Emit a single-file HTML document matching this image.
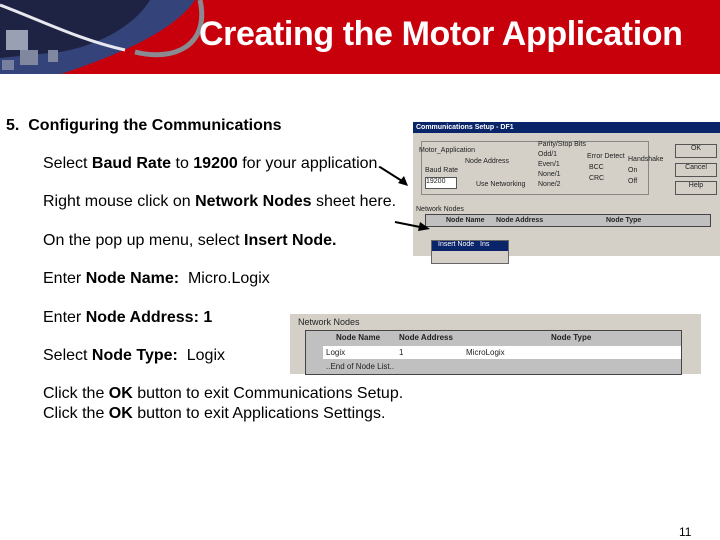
<!DOCTYPE html>
<html><head><meta charset="utf-8"><style>
*{margin:0;padding:0}
body{width:720px;height:540px;position:relative;background:#fff;font-family:"Liberation Sans",sans-serif;overflow:hidden}
.t{position:absolute;font-size:16px;color:#000;white-space:nowrap}
.win{position:absolute;background:#d4d0c8;font-size:7px;color:#222}
</style></head><body>
<svg width="720" height="76" style="position:absolute;left:0;top:0">
<rect width="720" height="76" fill="#c8000c"/>
<path d="M0 0 L195 0 C175 30 120 55 55 76 L0 76 Z" fill="#34447a"/>
<path d="M0 0 L150 0 C135 25 100 45 60 52 L0 58 Z" fill="#1e2344"/>
<path d="M0 5 C40 20 80 40 125 50" stroke="#e8e8f0" stroke-width="3" fill="none"/>
<path d="M135 52 C175 62 210 45 200 0" stroke="#8a8a90" stroke-width="5" fill="none"/>
<rect x="6" y="30" width="22" height="20" fill="#9aa0b4"/>
<rect x="20" y="50" width="18" height="15" fill="#8088a0"/>
<rect x="48" y="50" width="10" height="12" fill="#8088a0"/>
<rect x="2" y="60" width="12" height="10" fill="#7880a0"/>
<rect x="0" y="74" width="720" height="2" fill="#fff"/>
</svg>
<div style="position:absolute;left:199px;top:15px;font-size:34px;color:#fff;font-weight:bold;letter-spacing:-0.4px">Creating the Motor Application</div>

<div class="t" style="left:6px;top:117px;font-weight:bold">5.&nbsp; Configuring the Communications</div>
<div class="t" style="left:43px;top:155px">Select <b>Baud Rate</b> to <b>19200</b> for your application.</div>
<div class="t" style="left:43px;top:193px">Right mouse click on <b>Network Nodes</b> sheet here.</div>
<div class="t" style="left:43px;top:232px">On the pop up menu, select <b>Insert Node.</b></div>
<div class="t" style="left:43px;top:270px">Enter <b>Node Name:</b>&nbsp; Micro.Logix</div>
<div class="t" style="left:43px;top:309px">Enter <b>Node Address: 1</b></div>
<div class="t" style="left:43px;top:347px">Select <b>Node Type:</b>&nbsp; Logix</div>
<div class="t" style="left:43px;top:385px">Click the <b>OK</b> button to exit Communications Setup.</div>
<div class="t" style="left:43px;top:405px">Click the <b>OK</b> button to exit Applications Settings.</div>
<div class="t" style="left:679px;top:525px;font-size:12px">11</div>

<div class="win" style="left:413px;top:122px;width:307px;height:134px">
<div style="position:absolute;left:0;top:0;width:304px;height:11px;background:#0a246a;color:#fff;font-weight:bold;font-size:7px;line-height:11px;padding-left:3px">Communications Setup - DF1</div>
<div style="position:absolute;left:8px;top:19px;width:226px;height:52px;border:1px solid #888"></div>
<div style="position:absolute;left:6px;top:25px">Motor_Application</div>
<div style="position:absolute;left:12px;top:45px">Baud Rate</div>
<div style="position:absolute;left:12px;top:55px;width:30px;height:10px;background:#fff;border:1px solid #555">19200</div>
<div style="position:absolute;left:52px;top:36px">Node Address</div>
<div style="position:absolute;left:63px;top:59px">Use Networking</div>
<div style="position:absolute;left:125px;top:18px;line-height:10px">Parity/Stop Bits<br>Odd/1<br>Even/1<br>None/1<br>None/2</div>
<div style="position:absolute;left:174px;top:29px;line-height:11px">Error Detect<br>&nbsp;BCC<br>&nbsp;CRC</div>
<div style="position:absolute;left:215px;top:32px;line-height:11px">Handshake<br>On<br>Off</div>
<div style="position:absolute;left:262px;top:22px;width:40px;height:12px;border:1px solid #555;text-align:center">OK</div>
<div style="position:absolute;left:262px;top:41px;width:40px;height:12px;border:1px solid #555;text-align:center">Cancel</div>
<div style="position:absolute;left:262px;top:59px;width:40px;height:12px;border:1px solid #555;text-align:center">Help</div>
<div style="position:absolute;left:3px;top:84px">Network Nodes</div>
<div style="position:absolute;left:12px;top:92px;width:284px;height:11px;background:#c0c0c0;border:1px solid #444;font-weight:bold;line-height:11px"><span style="position:absolute;left:20px">Node Name</span><span style="position:absolute;left:70px">Node Address</span><span style="position:absolute;left:180px">Node Type</span></div>
<div style="position:absolute;left:18px;top:118px;width:76px;height:22px;background:#d4d0c8;border:1px solid #666"><div style="background:#0a246a;color:#fff;height:10px;padding-left:6px">Insert Node&nbsp;&nbsp; Ins</div></div>
</div>

<div class="win" style="left:290px;top:314px;width:411px;height:60px">
<div style="position:absolute;left:8px;top:3px;font-size:9px">Network Nodes</div>
<div style="position:absolute;left:15px;top:16px;width:375px;height:43px;border:1px solid #444;background:#c0c0c0;font-size:8px">
<div style="position:absolute;top:0;left:0;right:0;height:14px;font-weight:bold;line-height:14px"><span style="position:absolute;left:30px">Node Name</span><span style="position:absolute;left:93px">Node Address</span><span style="position:absolute;left:245px">Node Type</span></div>
<div style="position:absolute;top:15px;left:17px;right:0;height:13px;background:#fff;line-height:13px"><span style="position:absolute;left:3px">Logix</span><span style="position:absolute;left:76px">1</span><span style="position:absolute;left:143px">MicroLogix</span></div>
<div style="position:absolute;top:29px;left:20px;line-height:13px">..End of Node List..</div>
</div>
</div>

<svg width="720" height="540" style="position:absolute;left:0;top:0">
<line x1="380" y1="167" x2="402" y2="181" stroke="#000" stroke-width="2"/>
<polygon points="408,186 398,183 404,176" fill="#000"/>
<line x1="395" y1="222" x2="420" y2="227" stroke="#000" stroke-width="2"/>
<polygon points="430,229 418,231 420,222" fill="#000"/>
</svg>
</body></html>
